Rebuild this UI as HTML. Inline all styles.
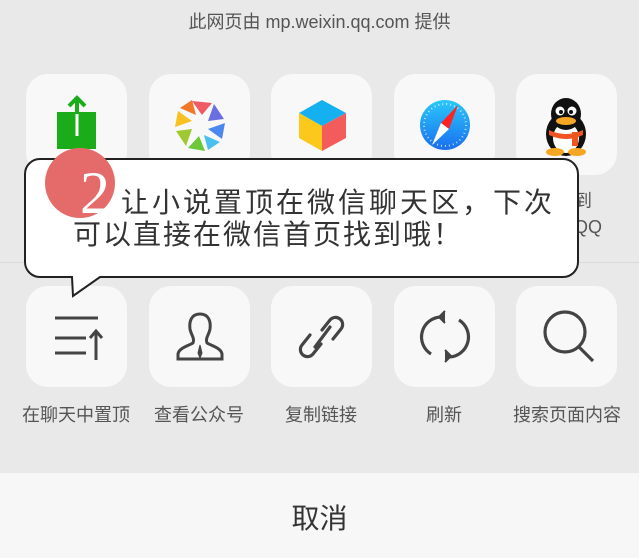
<!DOCTYPE html>
<html><head><meta charset="utf-8"><style>
body{margin:0;width:639px;height:558px;overflow:hidden;background:#e9e9e9;font-family:"Liberation Sans","Noto Sans CJK SC",sans-serif;position:relative}
.t{position:absolute;width:101px;height:101px;background:#f8f8f8;border-radius:22px}
.t svg{position:absolute;left:0;top:0}
.l{position:absolute;width:140px;text-align:center;font-size:18px;color:#555;top:401px}
</style></head><body>
<div style="position:absolute;top:8px;width:639px;text-align:center;font-size:18px;color:#555">此网页由 mp.weixin.qq.com 提供</div>
<div style="position:absolute;left:0;top:262px;width:639px;height:1px;background:#dadada"></div>

<div class="t" style="left:26px;top:74px"><svg width="101" height="101"><rect x="31" y="38" width="39" height="37" fill="#1aad19"/><path d="M51 62V26M43 32l8-8 8 8" stroke="#1aad19" stroke-width="4" fill="none"/><path d="M51 62V40" stroke="#fff" stroke-width="3"/></svg></div>
<div class="t" style="left:149px;top:74px"><svg width="101" height="101"><g transform="translate(51,51)"><path d="M-8-24L12-22 2-10Z" fill="#ef5a64"/><path d="M14-21L24-6 8-4Z" fill="#6a6ee0"/><path d="M25-2L22 14 8 4Z" fill="#4a88f0"/><path d="M20 17L8 25 4 10Z" fill="#49c0f0"/><path d="M5 26L-12 23-1 11Z" fill="#6cc83a"/><path d="M-14 21L-24 6-8 4Z" fill="#a0c830"/><path d="M-25 2L-22-14-8-4Z" fill="#f8c020"/><path d="M-20-17L-8-25-4-10Z" fill="#f07828"/></g></svg></div>
<div class="t" style="left:271px;top:74px"><svg width="101" height="101"><path d="M51 26L75 39 51 52 28 39Z" fill="#14b0f0"/><path d="M28 39L51 52V77L28 64Z" fill="#fcc81c"/><path d="M75 39L51 52V77L75 64Z" fill="#f45b5b"/></svg></div>
<div class="t" style="left:394px;top:74px"><svg width="101" height="101"><defs><linearGradient id="g" x1="0" y1="0" x2="0" y2="1"><stop offset="0" stop-color="#2ac8fa"/><stop offset="1" stop-color="#1a6ef0"/></linearGradient></defs><circle cx="51" cy="51" r="25" fill="url(#g)"/><circle cx="51" cy="51" r="21" fill="none" stroke="#fff" stroke-width="2" stroke-dasharray="1 3" opacity=".7"/><path d="M64 31L55 55 47 49Z" fill="#f22"/><path d="M38 71L47 49 55 55Z" fill="#fff"/></svg></div>
<div class="t" style="left:516px;top:74px"><svg width="101" height="101"><ellipse cx="50" cy="60" rx="20" ry="22" fill="#111"/><ellipse cx="50" cy="64" rx="13" ry="15" fill="#fff"/><ellipse cx="50" cy="40" rx="15" ry="16" fill="#111"/><circle cx="44" cy="37" r="4.5" fill="#fff"/><circle cx="56" cy="37" r="4.5" fill="#fff"/><circle cx="45" cy="38" r="2" fill="#111"/><circle cx="55" cy="38" r="2" fill="#111"/><ellipse cx="50" cy="47" rx="10" ry="4" fill="#f5a623"/><path d="M33 56Q50 64 67 56L67 61Q50 69 33 61Z" fill="#e52"/><rect x="56" y="58" width="6" height="14" fill="#e52"/><ellipse cx="39" cy="78" rx="9" ry="4" fill="#f5a623"/><ellipse cx="61" cy="78" rx="9" ry="4" fill="#f5a623"/></svg></div>
<div style="position:absolute;left:574px;top:188px;font-size:18px;color:#555;line-height:26px">到<br>QQ</div>

<div class="t" style="left:26px;top:286px"><svg width="101" height="101" stroke="#444" stroke-width="3" fill="none"><path d="M29 32H72M29 52H60M29 67H60M70 74V46M64 52l6-7 6 7"/></svg></div>
<div class="t" style="left:149px;top:286px"><svg width="101" height="101" stroke="#444" stroke-width="3" fill="none"><path d="M51 28c-9 0-11 8-10 15 1 6 5 9 3 14-5 3-14 5-15 11v5h44v-5c-1-6-10-8-15-11-2-5 2-8 3-14 1-7-1-15-10-15z"/><path d="M51 59l-2 8 2 5 2-5z" fill="#444" stroke-width="1"/></svg></div>
<div class="t" style="left:271px;top:286px"><svg width="101" height="101" stroke="#444" stroke-width="3.2" fill="none" stroke-linecap="round"><path d="M51 44l8-10a7 7 0 0 1 11 9l-8 10"/><path d="M50 58l-8 10a7 7 0 0 1-11-9l8-10"/><path d="M44 61l15-20"/></svg></div>
<div class="t" style="left:394px;top:286px"><svg width="101" height="101" stroke="#444" stroke-width="3.2" fill="none"><path d="M47 31a20 20 0 0 0-10 37M55 71a20 20 0 0 0 10-37"/><path d="M51 25l-6 6 6 6M51 64l6 6-6 6" fill="#444" stroke-width="2"/></svg></div>
<div class="t" style="left:516px;top:286px"><svg width="101" height="101" stroke="#444" stroke-width="3.2" fill="none"><circle cx="49" cy="46" r="20"/><path d="M63 61l14 14"/></svg></div>

<div class="l" style="left:6px">在聊天中置顶</div>
<div class="l" style="left:129px">查看公众号</div>
<div class="l" style="left:251px">复制链接</div>
<div class="l" style="left:374px">刷新</div>
<div class="l" style="left:497px">搜索页面内容</div>

<div style="position:absolute;left:0;top:473px;width:639px;height:85px;background:#f7f7f7"></div>
<div style="position:absolute;left:0;top:497px;width:639px;text-align:center;font-size:28px;color:#333">取消</div>

<svg style="position:absolute;left:0;top:0" width="639" height="558"><path d="M40 159H563a15 15 0 0 1 15 15V262a15 15 0 0 1-15 15H100L73 296 72 277H40a15 15 0 0 1-15-15V174a15 15 0 0 1 15-15z" fill="#fff" stroke="#222" stroke-width="2"/><circle cx="80" cy="183" r="35" fill="#e56b6b"/><text x="95" y="213" font-family="Liberation Serif,serif" font-size="60" fill="#fff" text-anchor="middle">2</text></svg>
<div style="position:absolute;left:121px;top:186px;font-size:28px;color:#333;letter-spacing:3px;line-height:34px;white-space:nowrap">让小说置顶在微信聊天区，下次</div>
<div style="position:absolute;left:73px;top:218px;font-size:28px;color:#333;letter-spacing:2px;line-height:34px;white-space:nowrap">可以直接在微信首页找到哦！</div>
</body></html>
